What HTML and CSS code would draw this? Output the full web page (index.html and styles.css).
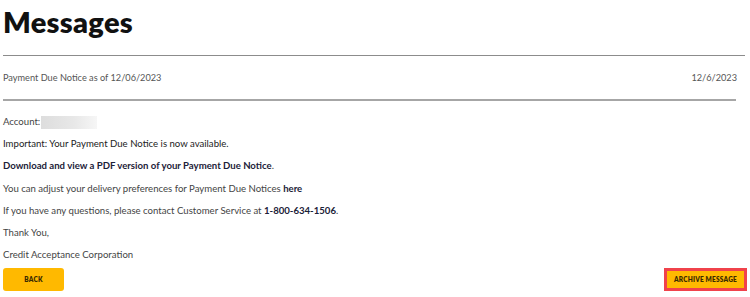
FILE: index.html
```html
<!DOCTYPE html>
<html lang="en">
<head>
  <meta charset="UTF-8" />
  <title>Messages</title>
  <link rel="stylesheet" href="styles.css">
</head>
<body>
  <main class="page">
    <h1 class="title">Messages</h1>

    <div class="subject-row">
      <span class="subject">Payment Due Notice as of 12/06/2023</span>
      <span class="date">12/6/2023</span>
    </div>

    <!-- message body -->
    <section class="message">
      <p>Account: <span class="masked"></span></p>
      <p class="strong">Important: Your Payment Due Notice is now available.</p>
      <p><a href="#" class="link">Download and view a PDF version of your Payment Due Notice</a>.</p>
      <p>You can adjust your delivery preferences for Payment Due Notices <a href="#" class="link">here</a></p>
      <p>If you have any questions, please contact Customer Service at <a href="#" class="link">1-800-634-1506</a>.</p>
      <p>Thank You,</p>
      <p>Credit Acceptance Corporation</p>
    </section>

    <div class="actions">
      <button class="btn" type="button">BACK</button>
      <button class="btn btn-focus" type="button">ARCHIVE MESSAGE</button>
    </div>
  </main>
</body>
</html>
```

FILE: styles.css
```css
body {margin:0; padding:0; font-family:Lato, "Open Sans", sans-serif; color:#444; background:#fff;}

.page {padding:0 3px; width:744px; box-sizing:border-box;}

.title {margin:0 -4px 0 0; padding-top:5px; height:56px; box-sizing:border-box; border-bottom:1px solid #8c8c8c;
  font-size:29px; font-weight:800; color:#111; line-height:34px; letter-spacing:.3px;}

/* subject row under the title rule */
.subject-row {
  display:flex; justify-content:space-between; align-items:center;
  height:43px; border-bottom:2px solid #a6a6a6; margin-right:5px;
  font-size:9.2px; color:#555;
}
.subject-row .date {margin-right:-1px;}

.message {padding-top:11px;}
.message p {margin:0; height:22.2px; line-height:20px; font-size:9.6px;}
.message .strong {color:#222;}
.link {color:#1b2138; font-weight:700; text-decoration:none;}
.masked {display:inline-block; width:56px; height:13px; vertical-align:middle; margin-left:-2px;
  background:linear-gradient(90deg,#ddd,#e8e8e8 60%,#f6f6f6);}

.actions {display:flex; justify-content:space-between; align-items:center; margin-top:1px; margin-right:-6px;}
.btn {
  font-family:Lato, sans-serif; font-size:6.5px; font-weight:800; letter-spacing:.2px;
  color:#3a2a00; background:#ffb900; border:0; border-radius:3px;
  height:23px; width:61px; padding:0; cursor:pointer;
}
.btn-focus {border-radius:0; width:83px; outline:3px solid #f0424b; outline-offset:-3px;}
```
